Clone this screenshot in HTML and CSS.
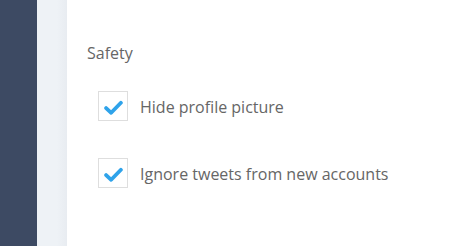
FILE: index.html
```html
<!DOCTYPE html>
<html>
<head>
<meta charset="utf-8">
<link rel="stylesheet" href="styles.css">
</head>
<body>
<div class="app">
  <aside class="sidebar"></aside>
  <div class="gutter"></div>
  <main class="content">
    <h2 class="section-title">Safety</h2>
    <label class="option">
      <span class="box"><svg viewBox="0 0 18 14" width="19" height="15"><path d="M2 7.5 L6.8 12 L16 2.5" fill="none" stroke="#2fa3ea" stroke-width="3.6" stroke-linecap="round" stroke-linejoin="round"/></svg></span>
      <span class="label">Hide profile picture</span>
    </label>
    <label class="option">
      <span class="box"><svg viewBox="0 0 18 14" width="19" height="15"><path d="M2 7.5 L6.8 12 L16 2.5" fill="none" stroke="#2fa3ea" stroke-width="3.6" stroke-linecap="round" stroke-linejoin="round"/></svg></span>
      <span class="label">Ignore tweets from new accounts</span>
    </label>
  </main>
</div>
</body>
</html>
```
FILE: styles.css
```css
html, body { margin: 0; padding: 0; }
body { width: 456px; height: 246px; overflow: hidden; font-family: "Open Sans", sans-serif; background: #fff; }
.app { display: flex; height: 246px; }
.sidebar { width: 37px; background: #3d4a63; flex: none; }
.gutter { width: 30px; flex: none; background: linear-gradient(to right, #eef2f6 0, #eef2f6 20px, #e8ecf1 30px); }
.content { flex: 1; padding: 42px 0 0 20px; background: #fff; }
.section-title { margin: 0 0 26px 0; font-size: 16px; font-weight: 400; color: #666; line-height: 23px; }
.option { display: flex; align-items: center; margin-left: 11px; margin-bottom: 37px; }
.box { width: 28px; height: 28px; border: 1px solid #dedede; display: flex; align-items: center; justify-content: center; flex: none; }
.box svg { display: block; margin-top: 2px; }
.label { margin-left: 12px; font-size: 16px; color: #666; line-height: 22px; margin-top: 1px; }
```
